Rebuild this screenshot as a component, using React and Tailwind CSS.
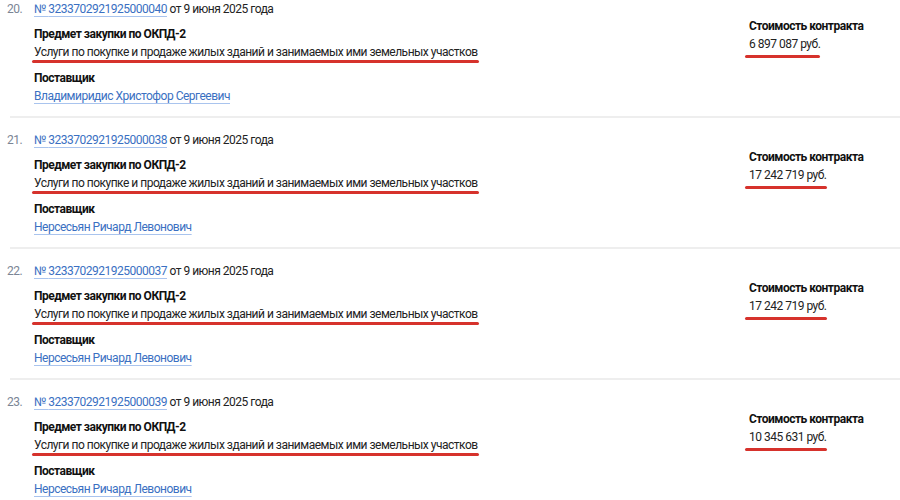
const items = [
  { n: 20, num: '3233702921925000040', supplier: 'Владимиридис Христофор Сергеевич', price: '6 897 087' },
  { n: 21, num: '3233702921925000038', supplier: 'Нерсесьян Ричард Левонович', price: '17 242 719' },
  { n: 22, num: '3233702921925000037', supplier: 'Нерсесьян Ричард Левонович', price: '17 242 719' },
  { n: 23, num: '3233702921925000039', supplier: 'Нерсесьян Ричард Левонович', price: '10 345 631' },
]

function Link({ children }) {
  return (
    <a className="text-[#3a70c2] underline decoration-[#a9c4ee] underline-offset-[3px]">{children}</a>
  )
}

function Item({ item }) {
  return (
    <div className="ml-[10px] h-[131px] border-t-2 border-[#eeeeee] flex">
      {/* номер */}
      <div className="w-[27px] -ml-[3px] pt-[13px] text-[#7b8595] leading-[18px]">{item.n}.</div>

      <div className="flex-1 pt-[13px]">
        <div className="leading-[18px] text-[#222]">
          <Link>№ {item.num}</Link> от 9 июня 2025 года
        </div>
        <div className="mt-[7px] leading-[18px] font-bold text-[#111]">Предмет закупки по ОКПД-2</div>
        <div className="inline-flex flex-col">
          <span className="leading-[16px] text-[#222]">
            Услуги по покупке и продаже жилых зданий и занимаемых ими земельных участков
          </span>
          <span className="h-[3px] rounded-full bg-[#d6322c] -ml-[2px] -mr-[1px]" />
        </div>
        <div className="mt-[6px] leading-[18px] font-bold text-[#111]">Поставщик</div>
        <div className="leading-[18px]">
          <Link>{item.supplier}</Link>
        </div>
      </div>

      <div className="w-[151px] pt-[30px]">
        <div className="leading-[18px] font-bold text-[#111]">Стоимость контракта</div>
        <div className="inline-flex flex-col">
          <span className="leading-[16px] text-[#222]">{item.price} руб.</span>
          <span className="mt-[3px] h-[3px] rounded-full bg-[#d6322c] -ml-[4px]" />
        </div>
      </div>
    </div>
  )
}

export default function App() {
  return (
    <div
      className="w-[900px] h-[500px] overflow-hidden bg-white text-[12px] tracking-[-0.5px]"
      style={{ fontFamily: 'Roboto, "Noto Sans", sans-serif' }}
    >
      <div className="-mt-[15px]">
        {items.map((it) => (
          <Item key={it.n} item={it} />
        ))}
      </div>
    </div>
  )
}
